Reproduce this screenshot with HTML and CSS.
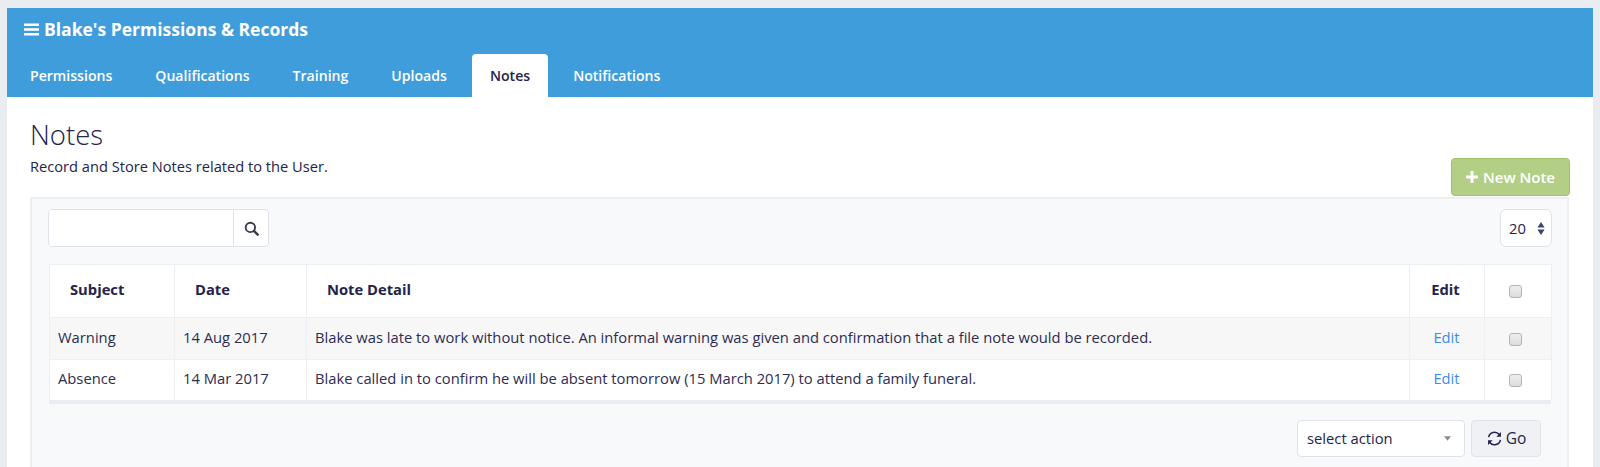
FILE: index.html
```html
<!DOCTYPE html>
<html lang="en">
<head>
<meta charset="utf-8">
<title>Blake's Permissions &amp; Records</title>
<link rel="stylesheet" href="styles.css">
</head>
<body>
<div class="panel">
  <header class="hero">
    <h1 class="hero-title">
      <svg class="bars" viewBox="0 0 14 12" aria-hidden="true"><path d="M0 0.5h14v2.2H0zM0 4.9h14v2.2H0zM0 9.3h14v2.2H0z"/></svg>
      Blake's Permissions &amp; Records
    </h1>
    <nav class="tabs">
      <a class="tab">Permissions</a>
      <a class="tab">Qualifications</a>
      <a class="tab">Training</a>
      <a class="tab">Uploads</a>
      <a class="tab tab-active">Notes</a>
      <a class="tab">Notifications</a>
    </nav>
  </header>
  <main class="content">
    <div class="head-row">
      <div>
        <h2 class="page-title">Notes</h2>
        <p class="page-sub">Record and Store Notes related to the User.</p>
      </div>
      <button class="btn-new">
        <svg class="plus" viewBox="0 0 12 12" aria-hidden="true"><path d="M4.5 0h3v4.5H12v3H7.5V12h-3V7.5H0v-3h4.5z"/></svg>
        New Note
      </button>
    </div>
    <section class="box">
      <div class="toolbar">
        <div class="search">
          <input class="search-input" type="text" aria-label="Search">
          <span class="search-btn">
            <svg class="icon-search" viewBox="0 0 16 16" aria-hidden="true"><circle cx="6.8" cy="6.8" r="5" fill="none" stroke-width="2"/><path d="M10.6 10.6l4 4" fill="none" stroke-width="2.6" stroke-linecap="round"/></svg>
          </span>
        </div>
        <div class="per-page">
          <span>20</span>
          <svg class="updown" viewBox="0 0 8 13" aria-hidden="true"><path d="M4 0l3.6 5.4H.4zM4 13L.4 7.6h7.2z"/></svg>
        </div>
      </div>
      <table class="grid">
        <colgroup>
          <col class="c-subject"><col class="c-date"><col class="c-detail"><col class="c-edit"><col class="c-check">
        </colgroup>
        <thead>
          <tr>
            <th class="th-pad">Subject</th>
            <th class="th-pad">Date</th>
            <th class="th-pad">Note Detail</th>
            <th class="center">Edit</th>
            <th class="center check-cell"><input class="check" type="checkbox" aria-label="Select all"></th>
          </tr>
        </thead>
        <tbody>
          <tr class="odd">
            <td>Warning</td>
            <td>14 Aug 2017</td>
            <td>Blake was late to work without notice. An informal warning was given and confirmation that a file note would be recorded.</td>
            <td class="center edit-cell"><a class="link">Edit</a></td>
            <td class="center check-cell"><input class="check" type="checkbox" aria-label="Select row"></td>
          </tr>
          <tr>
            <td>Absence</td>
            <td>14 Mar 2017</td>
            <td>Blake called in to confirm he will be absent tomorrow (15 March 2017) to attend a family funeral.</td>
            <td class="center edit-cell"><a class="link">Edit</a></td>
            <td class="center check-cell"><input class="check" type="checkbox" aria-label="Select row"></td>
          </tr>
        </tbody>
      </table>
      <div class="actions">
        <div class="action-select">
          <span>select action</span>
          <svg class="caret" viewBox="0 0 8 5" aria-hidden="true"><path d="M0 0h8L4 5z"/></svg>
        </div>
        <button class="btn-go">
          <svg class="icon-refresh" viewBox="0 0 20 20" aria-hidden="true"><path d="M3 8.5A7.2 7.2 0 0 1 15.6 5.2" fill="none" stroke-width="1.8"/><path d="M17 11.5A7.2 7.2 0 0 1 4.4 14.8" fill="none" stroke-width="1.8"/><path class="head" d="M17.6 2.4v5.4h-5.4zM2.4 17.6v-5.4h5.4z"/></svg>
          Go
        </button>
      </div>
    </section>
  </main>
</div>
</body>
</html>
```
FILE: styles.css
```css
* { box-sizing: border-box; }
html, body { height: 467px; overflow: hidden; }
body {
  margin: 0;
  padding: 8px 7px 0;
  background: #e9edf2;
  color: #23234d;
  font-family: "Open Sans", "Liberation Sans", sans-serif;
  font-size: 14.75px;
}
.panel { background: #fff; height: 459px; overflow: hidden; }
.hero { background: #409ddc; height: 89px; color: #fff; display: flex; flex-direction: column; justify-content: space-between; }
.hero-title { margin: 0; padding: 9px 0 0 17px; font-size: 17.5px; line-height: 24px; font-weight: 700; display: flex; align-items: center; gap: 5px; }
.bars { width: 15px; height: 13px; fill: #fff; }
.tabs { display: flex; padding-left: 5px; }
.tab { display: block; height: 43px; line-height: 44px; padding: 0 18px; margin-right: 7px; font-weight: 600; color: #fff; font-size: 14.1px; border-radius: 4px 4px 0 0; }
.tab-active { background: #fff; color: #23234d; }
.content { padding: 0 23px; }
.head-row { display: flex; justify-content: space-between; align-items: flex-end; height: 100px; }
.page-title { margin: 0; font-size: 27.5px; line-height: 36px; font-weight: 300; }
.page-sub { margin: 3px 0 21px; line-height: 20px; font-size: 14.65px; }
.btn-new { display: flex; align-items: center; justify-content: center; gap: 5px; width: 119px; height: 38px; margin-bottom: 1px; background: #b3cf85; border: 1px solid #9fc267; border-radius: 4px; color: #fff; font: 600 15px "Open Sans", sans-serif; }
.plus { width: 12px; height: 12px; fill: #fff; }
.box { background: #f8f9fb; border: 2px solid #edeff3; border-bottom: 0; height: 300px; padding: 10px 15px 0 16px; width: 1539px; }
.toolbar { display: flex; justify-content: space-between; height: 38px; margin-bottom: 17px; }
.search { display: flex; width: 221px; height: 38px; background: #fff; border: 1px solid #dfe2e8; border-radius: 4px; overflow: hidden; }
.search-input { flex: 1; min-width: 0; border: 0; background: #fff; outline: 0; }
.search-btn { width: 35px; display: flex; align-items: center; justify-content: center; border-left: 1px solid #dfe2e8; }
.icon-search { width: 15px; height: 15px; stroke: #3a3a4e; }
.per-page { width: 52px; height: 38px; background: #fff; border: 1px solid #dfe2e8; border-radius: 6px; display: flex; align-items: center; justify-content: space-between; padding: 0 6px 0 8px; font-weight: 500; }
.updown { width: 8px; height: 13px; fill: #3d4470; }
.grid { width: 1502px; margin-left: 1px; border-collapse: collapse; table-layout: fixed; background: #fff; }
.c-subject { width: 125px; }
.c-date { width: 132px; }
.c-detail { width: 1103px; }
.c-edit { width: 75px; }
.c-check { width: 67px; }
th, td { border: 1px solid #edeff3; text-align: left; padding: 0 8px 4px; }
.grid tbody tr:last-child td { border-bottom: 0; }
th { height: 53px; font-weight: 700; font-size: 14.75px; }
.th-pad { padding-left: 20px; }
td { height: 40px; color: #2d2d52; }
.odd td { background: #f7f7f7; height: 42px; }
.center { text-align: center; padding-left: 0; padding-right: 3px; }
.grid td.edit-cell { padding-right: 1px; }
.check-cell { padding-right: 5px; }
.grid td.check-cell { padding-bottom: 2px; }
.link { color: #3b8de8; }
.check { appearance: none; display: inline-block; vertical-align: middle; width: 13px; height: 13px; margin: 0; background: linear-gradient(#efefef, #dcdcdc); border: 1px solid #b4b4b4; border-radius: 3px; }
.actions { display: flex; justify-content: flex-end; align-items: flex-start; gap: 6px; margin-left: 1px; width: 1502px; padding: 16px 10px 0 0; border-top: 4px solid #e9edf2; }
.action-select { width: 168px; height: 37px; background: #fff; border: 1px solid #dfe2e8; border-radius: 4px; display: flex; align-items: center; justify-content: space-between; padding: 0 13px 0 9px; }
.caret { width: 7px; height: 5px; fill: #8a8a92; }
.btn-go { width: 70px; height: 37px; display: flex; align-items: center; justify-content: center; gap: 3px; background: #f0f1f5; border: 1px solid #e0e3e8; border-radius: 4px; color: #23234d; font: 400 15.5px "Open Sans", sans-serif; }
.icon-refresh { width: 17px; height: 17px; stroke: #23234d; }
.icon-refresh .head { fill: #23234d; stroke: none; }
```
